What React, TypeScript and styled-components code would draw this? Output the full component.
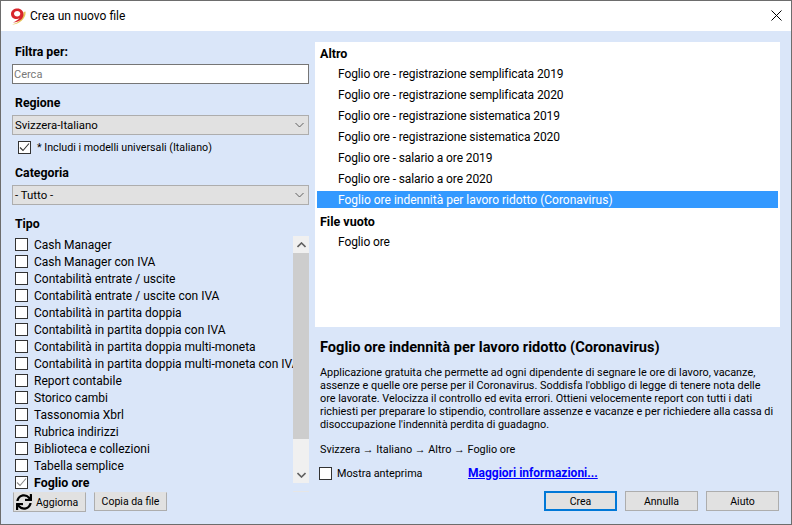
import React from 'react';
import styled, { createGlobalStyle } from 'styled-components';
import { FaSync } from 'react-icons/fa';

const GlobalStyle = createGlobalStyle`
  html, body {
    margin: 0;
    padding: 0;
    background: #dae6f9;
  }
  * {
    box-sizing: border-box;
  }
`;

const Dialog = styled.div`
  width: 792px;
  height: 525px;
  display: flex;
  flex-direction: column;
  background: #dae6f9;
  border: 1px solid #6d6d6d;
  font-family: Roboto, 'Noto Sans', sans-serif;
  font-size: 12px;
  color: #000;
  overflow: hidden;
`;

const TitleBar = styled.div`
  height: 30px;
  flex: none;
  display: flex;
  align-items: center;
  padding-left: 9px;
  background: #fff;
`;

const TitleText = styled.span`
  margin-left: 4px;
  flex: 1;
`;

const CloseButton = styled.div`
  width: 30px;
  height: 30px;
  padding-bottom: 2px;
  display: flex;
  align-items: center;
  justify-content: center;
`;

const Body = styled.div`
  flex: 1;
  min-height: 0;
  display: flex;
  padding: 11px 11px 0 11px;
`;

const LeftPane = styled.div`
  width: 297px;
  flex: none;
  display: flex;
  flex-direction: column;
`;

const RightPane = styled.div`
  flex: 1;
  min-width: 0;
  margin-left: 6px;
  display: flex;
  flex-direction: column;
`;

const FieldLabel = styled.div<{ $top: number }>`
  height: 16px;
  line-height: 16px;
  margin-top: ${(props) => props.$top}px;
  padding-left: 3px;
  font-size: 12.3px;
  font-weight: 700;
`;

const SearchInput = styled.div`
  height: 20px;
  margin-top: 4px;
  padding: 2px 0 0 1px;
  line-height: 16px;
  font-size: 11px;
  background: #fff;
  border: 1px solid #767676;
  color: #787878;
`;

const Combo = styled.div`
  height: 20px;
  margin-top: 4px;
  display: flex;
  align-items: center;
  justify-content: space-between;
  padding: 0 4px 0 2px;
  font-size: 11.4px;
  background: #e1e1e1;
  border: 1px solid #adadad;
`;

const UniversalRow = styled.div`
  height: 16px;
  margin-top: 4px;
  padding-left: 6px;
  display: flex;
  align-items: center;
  gap: 6px;
  font-size: 10.7px;
`;

const CheckBox = styled.span`
  width: 13px;
  height: 13px;
  flex: none;
  display: flex;
  align-items: center;
  justify-content: center;
  background: #fff;
  border: 1px solid #333;
`;

const TypeArea = styled.div`
  height: 255px;
  margin-top: 4px;
  display: flex;
  align-items: flex-start;
`;

const TypeList = styled.div`
  width: 281px;
  height: 255px;
  flex: none;
  overflow: hidden;
  padding-left: 3px;
`;

const TypeRow = styled.div<{ $bold?: boolean }>`
  height: 17px;
  display: flex;
  align-items: center;
  gap: 6px;
  white-space: nowrap;
  font-size: ${(props) => (props.$bold ? 12.4 : 12)}px;
  font-weight: ${(props) => (props.$bold ? 700 : 400)};
`;

const ScrollColumn = styled.div`
  width: 16px;
  flex: none;
  display: flex;
  flex-direction: column;
`;

const ScrollBar = styled.div`
  height: 247px;
  flex: none;
  display: flex;
  flex-direction: column;
  background: #f0f0f0;
`;

const ScrollEnd = styled.div`
  height: 1px;
  margin-top: 8px;
  flex: none;
  background: #e6e6e6;
`;

const ScrollArrow = styled.div`
  height: 17px;
  flex: none;
  display: flex;
  align-items: center;
  justify-content: center;
`;

const ScrollThumb = styled.div`
  height: 186px;
  flex: none;
  background: #cdcdcd;
`;

const ScrollTrack = styled.div`
  flex: 1;
`;

const LeftButtons = styled.div`
  display: flex;
  align-items: flex-start;
  gap: 8px;
  margin-top: 1px;
  padding-left: 1px;
`;

const PlainButton = styled.div<{ $h: number; $icon?: boolean }>`
  width: 73px;
  height: ${(props) => props.$h}px;
  display: flex;
  align-items: center;
  justify-content: ${(props) => (props.$icon ? 'flex-start' : 'center')};
  gap: 4px;
  padding-left: ${(props) => (props.$icon ? 2 : 0)}px;
  font-size: 10.5px;
  background: #e1e1e1;
  border: 1px solid #adadad;
  border-top-color: #e1e1e1;
`;

const FileList = styled.div`
  height: 285px;
  flex: none;
  background: #fff;
  padding: 2px 2px 0;
`;

const GroupRow = styled.div`
  height: 17px;
  line-height: 17px;
  margin-bottom: 4px;
  padding: 1px 0 0 3px;
  font-size: 12.5px;
  font-weight: 700;
`;

const FileRow = styled.div<{ $selected?: boolean }>`
  height: 17px;
  line-height: 17px;
  margin-bottom: 4px;
  padding: 1px 0 0 21px;
  letter-spacing: ${(props) => (props.$selected ? 0 : -0.11)}px;
  background: ${(props) => (props.$selected ? '#3399ff' : 'transparent')};
  color: ${(props) => (props.$selected ? '#fff' : '#000')};
`;

const Details = styled.div`
  flex: 1;
  display: flex;
  flex-direction: column;
  padding: 0 1px 0 5px;
`;

const DetailTitle = styled.div`
  margin-top: 10px;
  height: 20px;
  line-height: 20px;
  font-size: 14.6px;
  font-weight: 700;
`;

const DetailText = styled.div`
  margin-top: 9px;
  font-size: 10.85px;
  line-height: 13px;
  white-space: nowrap;
`;

const DetailPath = styled.div`
  margin-top: 12px;
  font-size: 10.85px;
  line-height: 13px;
`;

const OptionsRow = styled.div`
  margin-top: 9px;
  margin-left: -1px;
  height: 16px;
  display: flex;
  align-items: center;
`;

const PreviewLabel = styled.span`
  width: 131px;
  margin-left: 5px;
  font-size: 10.8px;
`;

const MoreLink = styled.a`
  color: #0000ff;
  font-weight: 700;
  text-decoration: underline;
`;

const ActionRow = styled.div`
  margin-top: 10px;
  display: flex;
  justify-content: flex-end;
  gap: 8px;
`;

const ActionButton = styled.div<{ $primary?: boolean }>`
  width: 73px;
  height: 20px;
  display: flex;
  align-items: center;
  justify-content: center;
  font-size: 10.5px;
  background: #e1e1e1;
  border: ${(props) => (props.$primary ? '2px solid #0078d7' : '1px solid #adadad')};
`;

const tipi = [
  'Cash Manager',
  'Cash Manager con IVA',
  'Contabilità entrate / uscite',
  'Contabilità entrate / uscite con IVA',
  'Contabilità in partita doppia',
  'Contabilità in partita doppia con IVA',
  'Contabilità in partita doppia multi-moneta',
  'Contabilità in partita doppia multi-moneta con IVA',
  'Report contabile',
  'Storico cambi',
  'Tassonomia Xbrl',
  'Rubrica indirizzi',
  'Biblioteca e collezioni',
  'Tabella semplice',
];

const altro = [
  'Foglio ore - registrazione semplificata 2019',
  'Foglio ore - registrazione semplificata 2020',
  'Foglio ore - registrazione sistematica 2019',
  'Foglio ore - registrazione sistematica 2020',
  'Foglio ore - salario a ore 2019',
  'Foglio ore - salario a ore 2020',
];

const Chevron = ({ up, bold }: { up?: boolean; bold?: boolean }) => (
  <svg width="9" height="6" viewBox="0 0 9 6">
    <path
      d={up ? 'M0.5 5L4.5 1L8.5 5' : 'M0.5 1L4.5 5L8.5 1'}
      fill="none"
      stroke="#606060"
      strokeWidth={bold ? 1.6 : 1}
    />
  </svg>
);

const Tick = ({ color }: { color: string }) => (
  <svg width="11" height="11" viewBox="0 0 11 11">
    <path d="M1 5.5L4 8.5L10 1.5" fill="none" stroke={color} strokeWidth="1.1" />
  </svg>
);

// logo: red 9 with a yellow crescent under it
const Logo = () => (
  <svg width="16" height="17" viewBox="0 0 16 17">
    <path d="M15.5 3.5C16.5 10 10 16.5 2 16.5C8 15 13.5 11 13.5 4Z" fill="#e6c65a" />
    <path
      fillRule="evenodd"
      fill="#d8262c"
      d="M1 6C1 2.5 4 0.5 7.5 0.5C11 0.5 13.5 3 13.5 6.5C13.5 11 9 14 3 14.5C6 13 8.5 11.5 9.5 10C8.5 10.8 7.5 11 6.5 11C3.5 11 1 9 1 6ZM4 5.8C4 7.4 5.5 8.5 7.2 8.5C9 8.5 10.3 7.4 10.3 5.8C10.3 4.2 9 3 7.2 3C5.5 3 4 4.2 4 5.8Z"
    />
  </svg>
);

export default function App() {
  return (
    <>
      <GlobalStyle />
      <Dialog>
        <TitleBar>
          <Logo />
          <TitleText>Crea un nuovo file</TitleText>
          <CloseButton>
            <svg width="11" height="11" viewBox="0 0 11 11">
              <path d="M0.5 0.5L10.5 10.5M10.5 0.5L0.5 10.5" stroke="#000" strokeWidth="1" />
            </svg>
          </CloseButton>
        </TitleBar>
        <Body>
          <LeftPane>
            <FieldLabel $top={2}>Filtra per:</FieldLabel>
            <SearchInput>Cerca</SearchInput>
            <FieldLabel $top={11}>Regione</FieldLabel>
            <Combo>
              Svizzera-Italiano
              <Chevron />
            </Combo>
            <UniversalRow>
              <CheckBox>
                <Tick color="#333" />
              </CheckBox>
              * Includi i modelli universali (Italiano)
            </UniversalRow>
            <FieldLabel $top={10}>Categoria</FieldLabel>
            <Combo>
              - Tutto -
              <Chevron />
            </Combo>
            <FieldLabel $top={11}>Tipo</FieldLabel>
            <TypeArea>
              <TypeList>
                {tipi.map((tipo) => (
                  <TypeRow key={tipo}>
                    <CheckBox />
                    {tipo}
                  </TypeRow>
                ))}
                <TypeRow $bold>
                  <CheckBox>
                    <Tick color="#888" />
                  </CheckBox>
                  Foglio ore
                </TypeRow>
              </TypeList>
              <ScrollColumn>
                <ScrollBar>
                  <ScrollArrow>
                    <Chevron up bold />
                  </ScrollArrow>
                  <ScrollThumb />
                  <ScrollTrack />
                  <ScrollArrow>
                    <Chevron bold />
                  </ScrollArrow>
                </ScrollBar>
                <ScrollEnd />
              </ScrollColumn>
            </TypeArea>
            <LeftButtons>
              <PlainButton $h={20} $icon>
                <FaSync size={16} />
                Aggiorna
              </PlainButton>
              <PlainButton $h={19}>Copia da file</PlainButton>
            </LeftButtons>
          </LeftPane>
          <RightPane>
            <FileList>
              <GroupRow>Altro</GroupRow>
              {altro.map((nome) => (
                <FileRow key={nome}>{nome}</FileRow>
              ))}
              <FileRow $selected>Foglio ore indennità per lavoro ridotto (Coronavirus)</FileRow>
              <GroupRow>File vuoto</GroupRow>
              <FileRow>Foglio ore</FileRow>
            </FileList>
            <Details>
              <DetailTitle>Foglio ore indennità per lavoro ridotto (Coronavirus)</DetailTitle>
              <DetailText>
                Applicazione gratuita che permette ad ogni dipendente di segnare le ore di lavoro, vacanze,
                <br />
                assenze e quelle ore perse per il Coronavirus. Soddisfa l'obbligo di legge di tenere nota delle
                <br />
                ore lavorate. Velocizza il controllo ed evita errori. Ottieni velocemente report con tutti i dati
                <br />
                richiesti per preparare lo stipendio, controllare assenze e vacanze e per richiedere alla cassa di
                <br />
                disoccupazione l'indennità perdita di guadagno.
              </DetailText>
              <DetailPath>Svizzera → Italiano → Altro → Foglio ore</DetailPath>
              <OptionsRow>
                <CheckBox />
                <PreviewLabel>Mostra anteprima</PreviewLabel>
                <MoreLink>Maggiori informazioni...</MoreLink>
              </OptionsRow>
              <ActionRow>
                <ActionButton $primary>Crea</ActionButton>
                <ActionButton>Annulla</ActionButton>
                <ActionButton>Aiuto</ActionButton>
              </ActionRow>
            </Details>
          </RightPane>
        </Body>
      </Dialog>
    </>
  );
}
